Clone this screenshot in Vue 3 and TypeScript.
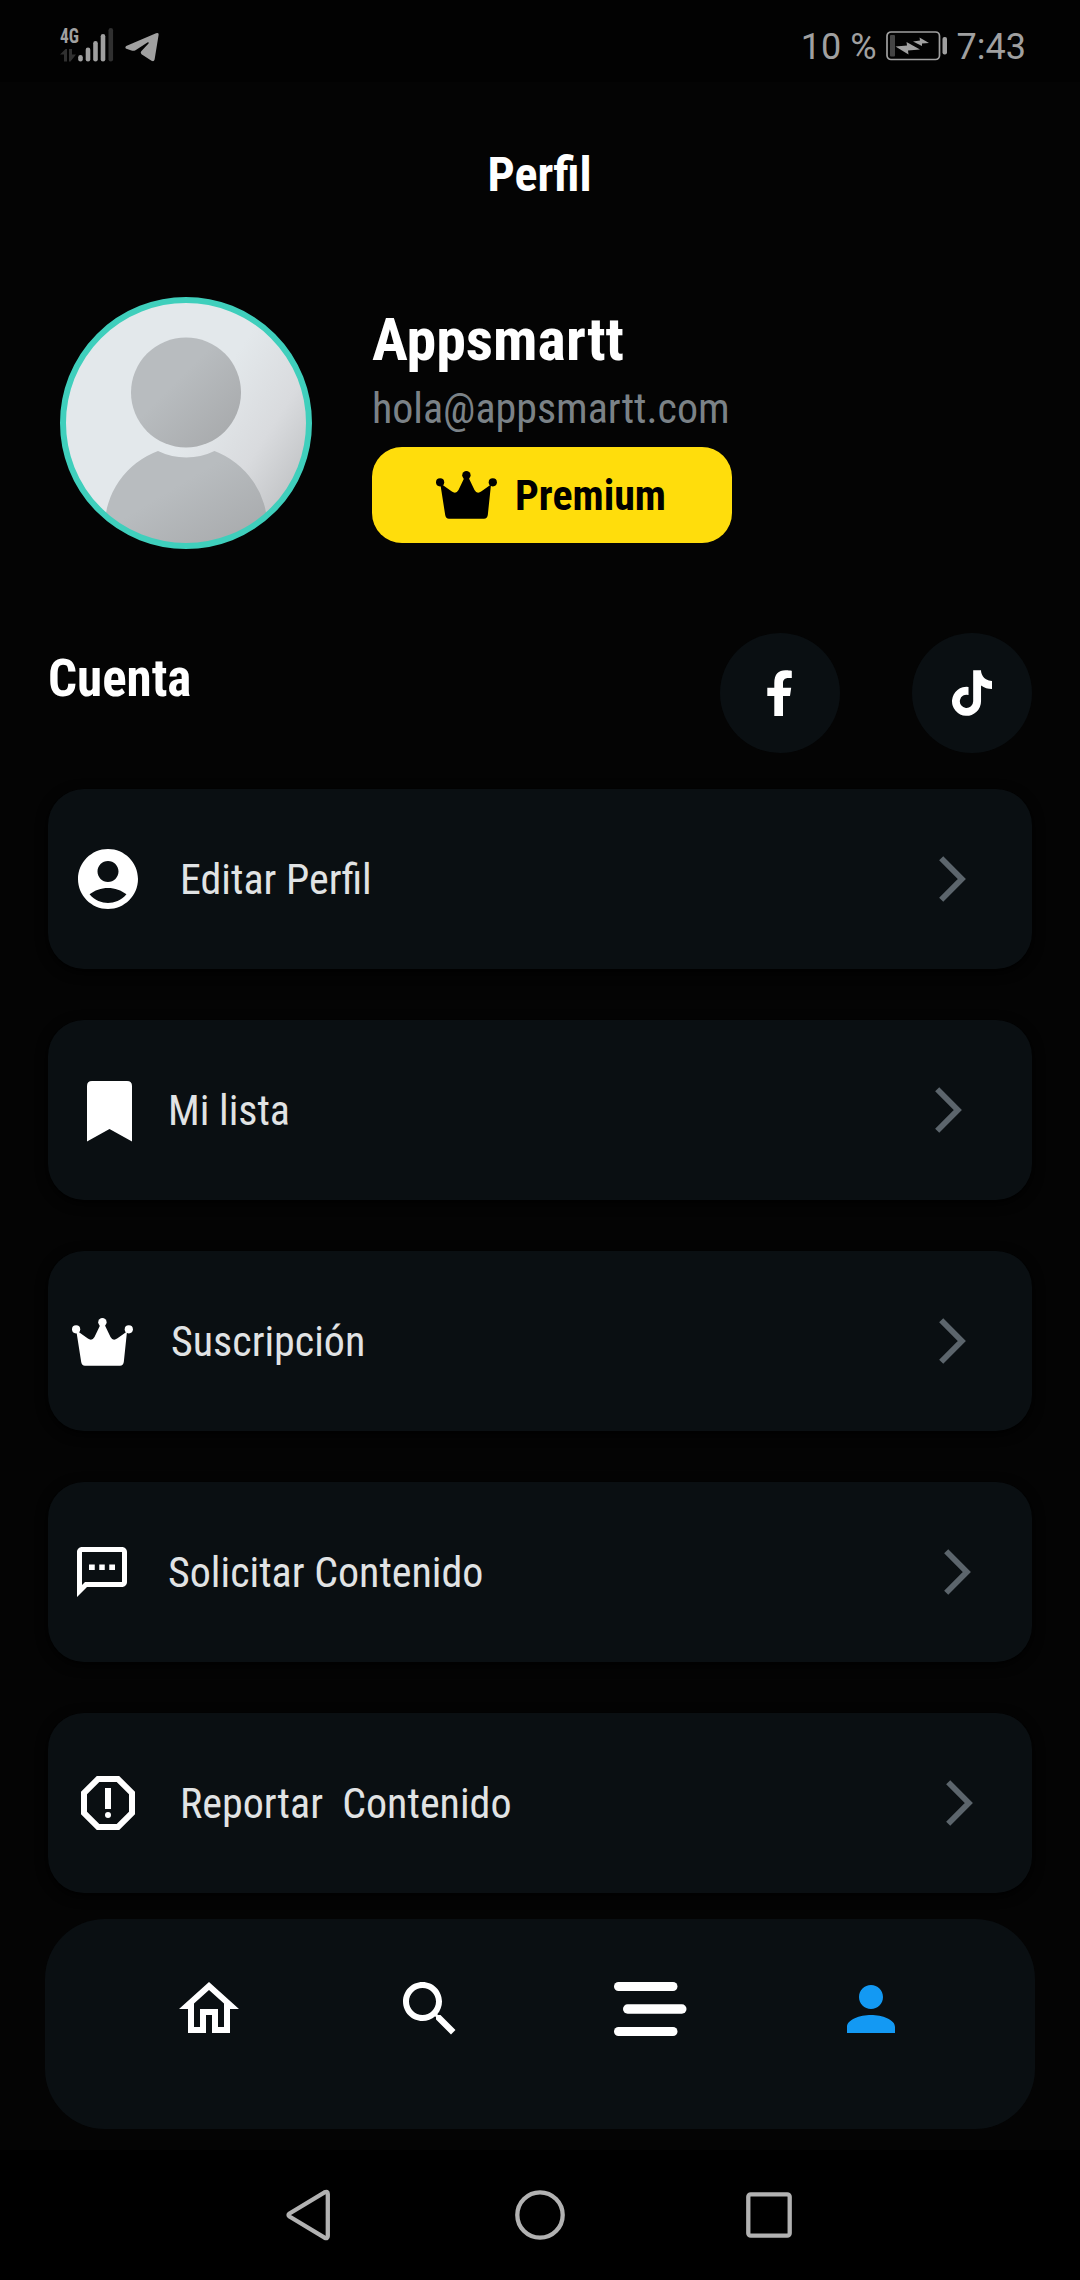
<script setup lang="ts">
interface MenuItem {
  id: string
  label: string
}

const items: MenuItem[] = [
  { id: 'edit', label: 'Editar Perfil' },
  { id: 'list', label: 'Mi lista' },
  { id: 'plan', label: 'Suscripción' },
  { id: 'request', label: 'Solicitar Contenido' },
  { id: 'report', label: 'Reportar\u00a0 Contenido' },
]
</script>

<template>
  <div class="screen">
    <header class="status">
      <svg class="signal" width="54" height="46" viewBox="0 -10 54 46">
        <text x="0" y="16" class="net" textLength="19" lengthAdjust="spacingAndGlyphs">4G</text>
        <g fill="#303030">
          <path d="M0 27.500 5.500 22H7v12.500H4V27.500ZM9 22h3v5.500h4L10.500 34.500H9Z" />
          <rect x="48.500" y="1" width="4.600" height="33.500" rx="2.300" />
        </g>
        <g fill="#a0a0a0">
          <rect x="18.200" y="28" width="4.600" height="6.500" rx="2.300" />
          <rect x="25.700" y="20.500" width="4.600" height="14" rx="2.300" />
          <rect x="33.200" y="14" width="4.600" height="20.500" rx="2.300" />
          <rect x="40.700" y="7" width="4.600" height="27.500" rx="2.300" />
        </g>
      </svg>
      <svg class="telegram" width="34" height="30" viewBox="0 0 34 30">
        <path fill="#a0a0a0" d="M1.200 14 31 1.200Q34 .3 33.600 3L29.600 27.500Q29 30 26.500 28.700L16.500 22.200Q15 20.500 16.500 19L23.500 11.500Q24.300 10 22.800 10.300L10.500 18.200Q9 19 7.200 18.700L1.300 16.800Q-.5 15.500 1.200 14Z" />
      </svg>
      <span class="sys percent">10 %</span>
      <svg class="battery" width="62" height="30" viewBox="0 0 62 30">
        <rect x="1" y="1" width="52.500" height="27.500" rx="4" fill="none" stroke="#a0a0a0" stroke-width="1.700" />
        <rect x="4" y="4" width="5" height="21.500" rx="1" fill="#444" />
        <rect x="56.500" y="6" width="4.500" height="17.500" rx="2" fill="#a0a0a0" />
        <path fill="#a0a0a0" d="M9.500 15.500 21 14.500 20.500 11 34 18.500 22 19.500 22.500 23.500ZM27 10.500 34 9.500 33.500 6.500 43 12 36 12.500V15Z" />
      </svg>
      <span class="sys clock">7:43</span>
    </header>

    <h1 class="title">Perfil</h1>

    <section class="profile">
      <svg class="avatar" width="252" height="252" viewBox="0 0 252 252">
        <defs>
          <linearGradient id="av-bg" x1="0" y1="0.1" x2="1" y2="0.75">
            <stop offset="0.55" stop-color="#e3e8eb" />
            <stop offset="0.78" stop-color="#d9dbde" />
            <stop offset="1" stop-color="#bdbfc1" />
          </linearGradient>
          <linearGradient id="av-fg" x1="0" y1="0" x2="1" y2="1">
            <stop offset="0.4" stop-color="#b8bcbf" />
            <stop offset="1" stop-color="#a5a7a9" />
          </linearGradient>
          <clipPath id="av-clip"><circle cx="126" cy="126" r="121" /></clipPath>
        </defs>
        <g clip-path="url(#av-clip)">
          <rect width="252" height="252" fill="url(#av-bg)" />
          <path fill="url(#av-fg)" d="M98 154A82 82 0 0 0 44.500 231V252H207.500V231A82 82 0 0 0 154.500 154A64.500 64.500 0 0 1 98 154Z" />
          <circle cx="126" cy="95.500" r="55" fill="url(#av-fg)" />
        </g>
        <circle cx="126" cy="126" r="123" fill="none" stroke="#3fcfbc" stroke-width="6" />
      </svg>
      <div class="who">
        <div class="name">Appsmartt</div>
        <div class="mail">hola@appsmartt.com</div>
        <div class="premium">
          <svg class="crown" width="61" height="48" viewBox="0 0 61 48">
            <use href="#crown" />
          </svg>
          <span>Premium</span>
        </div>
      </div>
    </section>

    <section class="account">
      <h2>Cuenta</h2>
      <div class="round">
        <svg width="26" height="46" viewBox="0 0 26 46">
          <path fill="#fff" d="M7.300 46V26H.3V17.800H7.300V13C7.300 4.200 11.500.3 18.500.3 21.500.3 24.800.8 24.800.8V8H21.500C17.500 8 16 10.200 16 13V17.800H24.200L23 26H16V46Z" />
        </svg>
      </div>
      <div class="round">
        <svg width="40" height="46" viewBox="0 0 448 512">
          <path fill="#fff" d="M448 209.900a210.100 210.100 0 0 1-122.800-39.300v178.800A162.600 162.600 0 1 1 185 188.300v89.900a74.600 74.600 0 1 0 52.200 71.200V0h88a121.200 121.200 0 0 0 1.900 22.200 122.200 122.200 0 0 0 53.900 80.200 121.400 121.400 0 0 0 67 20.100z" />
        </svg>
      </div>
    </section>

    <main class="menu">
      <div v-for="item in items" :key="item.id" class="card" :class="item.id">
        <svg v-if="item.id === 'edit'" width="72" height="72" viewBox="0 0 24 24">
          <path fill="#fff" d="M12 2C6.480 2 2 6.480 2 12s4.480 10 10 10 10-4.480 10-10S17.520 2 12 2zm0 4c1.930 0 3.500 1.570 3.500 3.500S13.930 13 12 13s-3.500-1.570-3.500-3.500S10.070 6 12 6zm0 14c-2.030 0-4.430-.82-6.140-2.880C7.550 15.800 9.680 15 12 15s4.450.8 6.140 2.120C16.430 19.180 14.030 20 12 20z" />
        </svg>
        <svg v-else-if="item.id === 'list'" class="bookmark" width="45" height="61" viewBox="0 0 45 61">
          <path fill="#fff" d="M5 0H40Q45 0 45 5V60.500L22.500 48 0 60.500V5Q0 0 5 0Z" />
        </svg>
        <svg v-else-if="item.id === 'plan'" class="crown light" width="61" height="48" viewBox="0 0 61 48">
          <g id="crown">
            <circle cx="4.100" cy="11.300" r="4.100" />
            <circle cx="30.400" cy="4.300" r="4.200" />
            <circle cx="56.800" cy="11.300" r="4.100" />
            <path d="M6 13.500 15.500 20.300Q20 23.500 22.500 19L28 7.500H33L38.500 19Q41 23.500 45.500 20.300L55 13.500 51.800 44Q51.300 47.700 48 47.700H13Q9.700 47.700 9.200 44L4.500 14Z" />
          </g>
        </svg>
        <svg v-else-if="item.id === 'request'" width="60" height="60" viewBox="0 0 24 24">
          <path fill="#fff" d="M20 2H4c-1.100 0-2 .9-2 2v18l4-4h14c1.100 0 2-.9 2-2V4c0-1.100-.9-2-2-2zm0 14H5.200L4 17.200V4h16v12zM6.800 9h2.300v2.200H6.800zM10.900 9h2.200v2.200h-2.200zM14.900 9h2.300v2.200h-2.300z" />
        </svg>
        <svg v-else width="72" height="72" viewBox="0 0 24 24">
          <path fill="#fff" d="M15.730 3H8.270L3 8.270v7.460L8.270 21h7.460L21 15.730V8.270L15.730 3zM19 14.900L14.900 19H9.100L5 14.900V9.100L9.100 5h5.800L19 9.100v5.800zM11 7h2v7h-2z" />
          <circle cx="12" cy="16" r="1" fill="#fff" />
        </svg>
        <span class="label">{{ item.label }}</span>
        <svg class="chevron" width="27" height="46" viewBox="0 0 27 46">
          <path d="M2.200 2.300 22.800 23 2.200 43.700" fill="none" stroke="#5c656c" stroke-width="5.800" />
        </svg>
      </div>
    </main>

    <nav class="tabs">
      <svg class="home" width="72" height="72" viewBox="0 0 24 24">
        <path fill="#fff" d="M12 5.690l5 4.500V18h-2v-6H9v6H7v-7.810l5-4.500M12 3L2 12h3v8h6v-6h2v6h6v-8h3L12 3z" />
      </svg>
      <svg class="search" width="72" height="72" viewBox="0 0 24 24">
        <path fill="#fff" d="M15.500 14h-.79l-.28-.27C15.410 12.590 16 11.110 16 9.500 16 5.910 13.090 3 9.500 3S3 5.910 3 9.500 5.910 16 9.500 16c1.610 0 3.090-.59 4.230-1.570l.27.28v.79l5 4.990L20.490 19l-4.990-5zm-6 0C7.010 14 5 11.990 5 9.500S7.010 5 9.500 5 14 7.010 14 9.500 11.990 14 9.500 14z" />
      </svg>
      <svg class="lines" width="73" height="54" viewBox="0 0 73 54">
        <g fill="#fff">
          <rect width="63.500" height="9" rx="4.500" />
          <rect x="9" y="22.300" width="63.500" height="9.400" rx="4.600" />
          <rect y="45" width="63.500" height="9" rx="4.500" />
        </g>
      </svg>
      <svg class="person" width="72" height="72" viewBox="0 0 24 24">
        <path fill="#1399f3" d="M12 12c2.210 0 4-1.790 4-4s-1.790-4-4-4-4 1.790-4 4 1.790 4 4 4zm0 2c-3.700 0-8 1.500-8 4v2h16v-2c0-2.500-4.300-4-8-4z" />
      </svg>
    </nav>

    <footer class="system">
      <svg width="44" height="52" viewBox="0 0 44 52">
        <path d="M3.500 24.500 38.500 3.300Q41.800 1.800 41.800 5V47Q41.800 50.200 38.500 48.700L3.500 27.500Q1.500 26 3.500 24.500Z" />
      </svg>
      <svg width="50" height="50" viewBox="0 0 50 50"><circle cx="25" cy="25" r="22.700" /></svg>
      <svg width="46" height="46" viewBox="0 0 46 46"><rect x="2.300" y="2.300" width="41.400" height="41.400" rx="2.500" /></svg>
    </footer>
  </div>
</template>

<style>
body {
  margin: 0;
  background: #040404;
}
</style>

<style scoped>
.screen {
  box-sizing: border-box;
  width: 1080px;
  height: 2280px;
  overflow: hidden;
  display: flex;
  flex-direction: column;
  background: #040404;
  color: #fff;
  font-family: 'Roboto Condensed', Roboto, 'Liberation Sans', sans-serif;
  font-stretch: 75%;
}
svg {
  display: block;
  flex: none;
}
.status {
  display: flex;
  align-items: flex-start;
  height: 82px;
  color: #a0a0a0;
  background: #020202;
}
.signal {
  margin: 17px 0 0 60px;
  overflow: visible;
}
.net {
  font: 700 21px 'Roboto Condensed', Roboto, sans-serif;
  fill: #a0a0a0;
}
.telegram {
  margin: 32px auto 0 11px;
}
.sys {
  font-family: Roboto, sans-serif;
  font-stretch: 100%;
  font-size: 36px;
  line-height: 40px;
  margin-top: 27px;
  white-space: nowrap;
}
.percent {
  margin-right: 9px;
}
.battery {
  margin: 31px 9px 0 0;
}
.clock {
  margin-right: 54px;
}
.title {
  margin: 63px 0 0;
  height: 60px;
  line-height: 60px;
  text-align: center;
  font-size: 48px;
  font-weight: 700;
  padding-right: 1px;
}
.profile {
  display: flex;
  margin: 92px 0 0 60px;
  height: 252px;
}
.who {
  margin-left: 60px;
  width: 360px;
  white-space: nowrap;
}
.name {
  margin-top: 8px;
  font-size: 60px;
  line-height: 70px;
  font-weight: 700;
}
.mail {
  font-size: 42px;
  line-height: 50px;
  margin-top: 9px;
  color: #7b8287;
}
.premium {
  display: flex;
  align-items: center;
  margin-top: 13px;
  height: 96px;
  padding-left: 64px;
  border-radius: 30px;
  background: #ffdd0c;
  color: #000;
  font-size: 42px;
  font-weight: 700;
}
.premium span {
  margin-left: 18px;
}
.crown {
  fill: #000;
}
.crown.light {
  fill: #fff;
}
.account {
  display: flex;
  margin: 84px 48px 0;
  height: 120px;
}
.account h2 {
  margin: 16px auto 0 0;
  font-size: 51px;
  line-height: 60px;
  font-weight: 700;
}
.round {
  box-sizing: border-box;
  display: flex;
  align-items: center;
  justify-content: center;
  width: 120px;
  height: 120px;
  padding-right: 1px;
  border-radius: 50%;
  background: #0a0f12;
}
.round + .round {
  margin-left: 72px;
}
.menu {
  display: flex;
  flex-direction: column;
  gap: 51px;
  margin: 36px 48px 0;
}
.card {
  display: flex;
  align-items: center;
  height: 180px;
  box-sizing: border-box;
  border-radius: 36px;
  padding-left: 24px;
  background: #0a0f12;
  box-shadow: 0 3px 12px #000;
}
.label {
  font-size: 42px;
  line-height: 50px;
  padding-top: 2px;
  color: #e1e3e4;
  white-space: nowrap;
  margin-left: 36px;
}
.chevron {
  margin-left: auto;
  margin-right: 66px;
}
.list {
  padding-left: 39px;
}
.bookmark {
  margin-top: 2px;
}
.list .label {
  margin-left: 36px;
}
.list .chevron {
  margin-right: 70px;
}
.plan .crown {
  margin-top: 2px;
}
.plan .label {
  margin-left: 38px;
}
.request .chevron {
  margin-right: 61px;
}
.report .chevron {
  margin-right: 59px;
}
.tabs {
  display: flex;
  align-items: flex-start;
  margin: 26px 45px 0;
  height: 210px;
  border-radius: 60px;
  background: #0a0f12;
}
.home {
  margin: 54px 0 0 128px;
}
.search {
  margin: 54px 0 0 149px;
}
.lines {
  margin: 63px 0 0 148px;
}
.person {
  margin: 54px 0 0 148px;
}
.system {
  display: flex;
  align-items: center;
  margin-top: 21px;
  box-sizing: border-box;
  height: 130px;
  padding-left: 286px;
  background: #000;
}
.system svg {
  fill: none;
  stroke: #b2b2b2;
  stroke-width: 4.300;
}
.system svg + svg {
  margin-left: 185px;
}
.system svg:last-child {
  margin-left: 181px;
}
</style>
